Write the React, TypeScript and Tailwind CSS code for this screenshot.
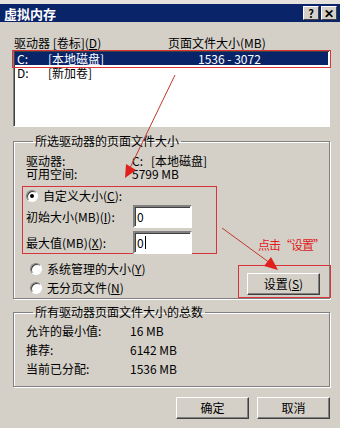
import React from "react";

const font = "font-['SimSun','Noto_Sans_CJK_SC',sans-serif]";

function Radio({ checked }: { checked?: boolean }) {
  return (
    <span className="relative inline-block h-[12px] w-[12px] rounded-full border border-[#808080] border-b-white border-r-white bg-white shadow-[inset_1px_1px_0_#404040]">
      {checked ? (
        <span className="absolute left-[3px] top-[3px] h-[4px] w-[4px] rounded-full bg-black" />
      ) : null}
    </span>
  );
}

function TextBox({ value, caret }: { value: string; caret?: boolean }) {
  return (
    <div className="flex h-[23px] w-[59px] items-center border-2 border-t-[#808080] border-l-[#808080] border-b-white border-r-white bg-white pl-[2px] text-[12px] shadow-[inset_1px_1px_0_#404040]">
      {value}
      {caret ? <span className="ml-[1px] h-[13px] w-px bg-black" /> : null}
    </div>
  );
}

function Btn({ label, className = "" }: { label: React.ReactNode; className?: string }) {
  return (
    <button
      type="button"
      className={
        "flex h-[22px] w-[73px] items-center justify-center border border-white border-b-[#404040] border-r-[#404040] bg-[#d4d0c8] text-[12px] text-black shadow-[inset_-1px_-1px_0_#808080] " +
        className
      }
    >
      {label}
    </button>
  );
}

export default function App() {
  return (
    <div className={"relative h-[428px] w-[340px] overflow-hidden bg-[#d4d0c8] text-black " + font}>
      {/* strip of the window behind */}
      <div className="h-[4px] bg-[#e6e3de]" />

      {/* title bar */}
      <div className="flex h-[18px] items-center justify-between bg-[#0a246a] pl-[4px] pr-[3px]">
        <span className="text-[13px] font-bold leading-none text-white">虚拟内存</span>
        <div className="flex gap-[2px]">
          <span className="flex h-[14px] w-[16px] items-center justify-center border border-white border-b-[#404040] border-r-[#404040] bg-[#d4d0c8] text-[11px] font-bold leading-none">?</span>
          <span className="flex h-[14px] w-[16px] items-center justify-center border border-white border-b-[#404040] border-r-[#404040] bg-[#d4d0c8] text-[12px] font-bold leading-none">✕</span>
        </div>
      </div>

      <div className="pl-[13px] pr-[10px]">
        {/* list header */}
        <div className="mt-[14px] flex h-[13px] items-center text-[12px] leading-[13px]">
          <span className="w-[155px] pl-[1px]">驱动器 [卷标](<u>D</u>)</span>
          <span>页面文件大小(MB)</span>
        </div>

        {/* drive list */}
        <div className="mt-[1px] h-[77px] border border-[#808080] border-b-white border-r-white bg-white p-px shadow-[inset_1px_1px_0_#404040]">
          <div className="flex h-[13px] items-center bg-[#0a246a] pl-[2px] text-[12px] leading-[13px] text-white">
            <span className="w-[31px]">C:</span>
            <span className="w-[150px]">[本地磁盘]</span>
            <span>1536 - 3072</span>
          </div>
          <div className="mt-px flex h-[13px] items-center pl-[2px] text-[12px] leading-[13px]">
            <span className="w-[31px]">D:</span>
            <span>[新加卷]</span>
          </div>
        </div>

        {/* selected drive */}
        <fieldset className="mt-[8px] h-[164px] border border-[#808080] pl-[12px] pr-[8px] shadow-[inset_1px_1px_0_white,1px_1px_0_white]">
          <legend className="ml-[7px] px-[2px] text-[12px] leading-[12px]">所选驱动器的页面文件大小</legend>
          <div className="mt-[7px] flex h-[13px] text-[12px] leading-[13px]">
            <span className="w-[106px]">驱动器:</span>
            <span>C:&nbsp;&nbsp;&nbsp;[本地磁盘]</span>
          </div>
          <div className="flex h-[13px] text-[12px] leading-[13px]">
            <span className="w-[106px]">可用空间:</span>
            <span>5799 MB</span>
          </div>

          <div className="-ml-[4px] mt-[6px] h-[68px] w-[195px] border border-[#d8343a] pl-[3px] pt-[2px]">
            <label className="flex h-[13px] items-center gap-[5px] text-[12px]">
              <Radio checked />
              <span>自定义大小(<u>C</u>):</span>
            </label>
            <div className="mt-[3px] flex items-center">
              <span className="w-[107px] text-[12px]">初始大小(MB)(<u>I</u>):</span>
              <TextBox value="0" />
            </div>
            <div className="mt-[3px] flex items-center">
              <span className="w-[107px] text-[12px]">最大值(MB)(<u>X</u>):</span>
              <TextBox value="0" caret />
            </div>
          </div>

          <div className="flex">
            <div className="flex flex-col pt-[5px] pl-[4px]">
              <label className="flex h-[19px] items-center gap-[5px] text-[12px]">
                <Radio />
                <span>系统管理的大小(<u>Y</u>)</span>
              </label>
              <label className="flex h-[19px] items-center gap-[5px] text-[12px]">
                <Radio />
                <span>无分页文件(<u>N</u>)</span>
              </label>
            </div>
            <Btn label={<span>设置(<u>S</u>)</span>} className="ml-auto mt-[19px] mr-[1px]" />
          </div>
        </fieldset>

        {/* totals */}
        <fieldset className="mt-[7px] h-[81px] border border-[#808080] pl-[12px] shadow-[inset_1px_1px_0_white,1px_1px_0_white]">
          <legend className="ml-[7px] px-[2px] text-[12px] leading-[12px]">所有驱动器页面文件大小的总数</legend>
          <div className="mt-[6px] flex flex-col gap-[6px] text-[12px] leading-[13px]">
            <div className="flex"><span className="w-[104px]">允许的最小值:</span><span>16 MB</span></div>
            <div className="flex"><span className="w-[104px]">推荐:</span><span>6142 MB</span></div>
            <div className="flex"><span className="w-[104px]">当前已分配:</span><span>1536 MB</span></div>
          </div>
        </fieldset>

        <div className="mt-[10px] flex justify-end gap-[8px]">
          <Btn label="确定" />
          <Btn label="取消" />
        </div>
      </div>

      {/* annotations */}
      <div className="pointer-events-none absolute left-[12px] top-[50px] h-[18px] w-[319px] border border-[#d8343a]" />
      <div className="pointer-events-none absolute left-[238px] top-[265px] h-[33px] w-[93px] border border-[#d8343a]" />
      <span className="pointer-events-none absolute left-[258px] top-[238px] text-[12px] leading-[14px] tracking-[-1px] text-[#e0201c]">点击“设置”</span>
      <svg className="pointer-events-none absolute left-0 top-0" width="340" height="428">
        <line x1="175" y1="75" x2="130" y2="168" stroke="#c0392b" strokeWidth="1" />
        <polygon points="125,178 126,164 136,170" fill="#e0201c" />
        <line x1="222" y1="228" x2="270" y2="263" stroke="#c0392b" strokeWidth="1" />
        <polygon points="278,270 264,266 271,257" fill="#e0201c" />
      </svg>
    </div>
  );
}
